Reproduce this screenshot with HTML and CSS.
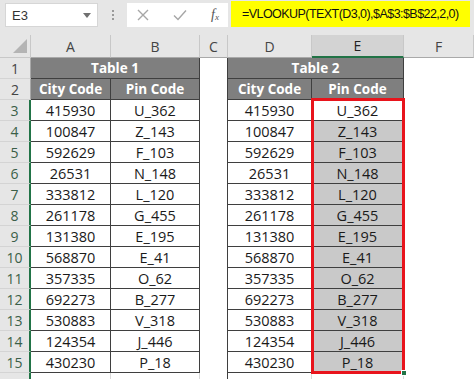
FILE: index.html
```html
<!DOCTYPE html>
<html lang="en">
<head>
    <meta charset="UTF-8">
    <meta name="viewport" content="width=device-width, initial-scale=1.0">
    <title>VLOOKUP with TEXT</title>
    <link rel="stylesheet" href="styles.css">
</head>
<body>
    <div class="toolbar">
        <div class="namebox">
            <span>E3</span>
            <svg class="caret" width="8" height="5" viewBox="0 0 8 5"><path d="M0 0h8L4 5z" fill="#707070"/></svg>
        </div>
        <div class="grip">
            <i></i><i></i><i></i>
        </div>
        <div class="fxbox">
            <svg width="12" height="12" viewBox="0 0 12 12"><path d="M1 1l10 10M11 1L1 11" stroke="#a6a6a6" stroke-width="1.4" fill="none"/></svg>
            <svg width="14" height="12" viewBox="0 0 14 12"><path d="M1 6.5l4 4L13 1.5" stroke="#a6a6a6" stroke-width="1.4" fill="none"/></svg>
            <span class="fx">f<sub>x</sub></span>
        </div>
        <div class="formula">=VLOOKUP(TEXT(D3,0),$A$3:$B$22,2,0)</div>
    </div>

    <div class="sheet">
        <div class="row head">
            <div class="corner"><svg width="14" height="14" viewBox="0 0 14 14"><path d="M14 0v14H0z" fill="#b4b4b4"/></svg></div>
            <div class="ch">A</div>
            <div class="ch">B</div>
            <div class="ch">C</div>
            <div class="ch">D</div>
            <div class="ch active">E</div>
            <div class="ch">F</div>
        </div>

        <div class="row">
            <div class="rh">1</div>
            <div class="th span2">Table 1</div>
            <div class="gap"></div>
            <div class="th span2">Table 2</div>
            <div class="blank"></div>
        </div>
        <div class="row">
            <div class="rh">2</div>
            <div class="th">City Code</div>
            <div class="th">Pin Code</div>
            <div class="gap"></div>
            <div class="th">City Code</div>
            <div class="th">Pin Code</div>
            <div class="blank"></div>
        </div>
        <div class="row">
            <div class="rh sel-row">3</div>
            <div class="c">415930</div><div class="c">U_362</div><div class="gap"></div>
            <div class="c">415930</div><div class="c">U_362</div><div class="blank"></div>
        </div>
        <div class="row">
            <div class="rh sel-row">4</div>
            <div class="c">100847</div><div class="c">Z_143</div><div class="gap"></div>
            <div class="c">100847</div><div class="c sel">Z_143</div><div class="blank"></div>
        </div>
        <div class="row">
            <div class="rh sel-row">5</div>
            <div class="c">592629</div><div class="c">F_103</div><div class="gap"></div>
            <div class="c">592629</div><div class="c sel">F_103</div><div class="blank"></div>
        </div>
        <div class="row">
            <div class="rh sel-row">6</div>
            <div class="c">26531</div><div class="c">N_148</div><div class="gap"></div>
            <div class="c">26531</div><div class="c sel">N_148</div><div class="blank"></div>
        </div>
        <div class="row">
            <div class="rh sel-row">7</div>
            <div class="c">333812</div><div class="c">L_120</div><div class="gap"></div>
            <div class="c">333812</div><div class="c sel">L_120</div><div class="blank"></div>
        </div>
        <div class="row">
            <div class="rh sel-row">8</div>
            <div class="c">261178</div><div class="c">G_455</div><div class="gap"></div>
            <div class="c">261178</div><div class="c sel">G_455</div><div class="blank"></div>
        </div>
        <div class="row">
            <div class="rh sel-row">9</div>
            <div class="c">131380</div><div class="c">E_195</div><div class="gap"></div>
            <div class="c">131380</div><div class="c sel">E_195</div><div class="blank"></div>
        </div>
        <div class="row">
            <div class="rh sel-row">10</div>
            <div class="c">568870</div><div class="c">E_41</div><div class="gap"></div>
            <div class="c">568870</div><div class="c sel">E_41</div><div class="blank"></div>
        </div>
        <div class="row">
            <div class="rh sel-row">11</div>
            <div class="c">357335</div><div class="c">O_62</div><div class="gap"></div>
            <div class="c">357335</div><div class="c sel">O_62</div><div class="blank"></div>
        </div>
        <div class="row">
            <div class="rh sel-row">12</div>
            <div class="c">692273</div><div class="c">B_277</div><div class="gap"></div>
            <div class="c">692273</div><div class="c sel">B_277</div><div class="blank"></div>
        </div>
        <div class="row">
            <div class="rh sel-row">13</div>
            <div class="c">530883</div><div class="c">V_318</div><div class="gap"></div>
            <div class="c">530883</div><div class="c sel">V_318</div><div class="blank"></div>
        </div>
        <div class="row">
            <div class="rh sel-row">14</div>
            <div class="c">124354</div><div class="c">J_446</div><div class="gap"></div>
            <div class="c">124354</div><div class="c sel">J_446</div><div class="blank"></div>
        </div>
        <div class="row">
            <div class="rh sel-row">15</div>
            <div class="c">430230</div><div class="c">P_18</div><div class="gap"></div>
            <div class="c">430230</div><div class="c sel">P_18</div><div class="blank"></div>
        </div>
        <div class="row">
            <div class="rh sel-row"></div>
            <div class="e"></div><div class="e"></div><div class="gap"></div>
            <div class="e"></div><div class="e"></div><div class="blank"></div>
        </div>

        <!-- red range outline drawn over E3:E15 -->
        <div class="range"><span class="handle"></span></div>
    </div>
</body>
</html>
```

FILE: styles.css
```css
:root {
    --chrome: #e6e6e6;
    --head-line: #c8c8c8;
    --table-head: #7f7f7f;
    --cell-line: #3f3f3f;
    --excel-green: #217346;
    --pick: #c9c9c9;
    --outline: #e8141c;
}

* {
    margin: 0;
    padding: 0;
    box-sizing: border-box;
}

body {
    width: 474px;
    height: 379px;
    overflow: hidden;
    background: #fff;
    font-family: 'Open Sans', 'Liberation Sans', sans-serif;
    color: #1a1a1a;
}

/* formula bar */
.toolbar {
    height: 35px;
    background: var(--chrome);
    display: flex;
    align-items: flex-start;
    padding: 3px 4px 0 5px;
}

.namebox {
    flex-shrink: 0;
    width: 93px;
    height: 24px;
    background: #fff;
    border: 1px solid #d6d6d6;
    display: flex;
    align-items: center;
    justify-content: space-between;
    padding: 0 6px 0 6px;
    font-family: 'Liberation Sans', sans-serif;
    font-size: 13px;
    color: #333;
}

.grip {
    flex-shrink: 0;
    width: 29px;
    height: 24px;
    display: flex;
    flex-direction: column;
    align-items: center;
    justify-content: center;
    gap: 2px;
}

.grip i {
    width: 2px;
    height: 2px;
    background: #9a9a9a;
}

.fxbox {
    flex-shrink: 0;
    width: 101px;
    height: 24px;
    background: #fff;
    display: flex;
    align-items: center;
    justify-content: space-between;
    padding: 0 9px 0 10px;
}

.fx {
    font-family: 'Liberation Serif', serif;
    font-style: italic;
    font-size: 14px;
    color: #555;
}

.fx sub {
    font-size: 9px;
    vertical-align: -1px;
}

.formula {
    flex: 1;
    min-width: 0;
    overflow: hidden;
    margin-left: 3px;
    margin-top: -2px;
    height: 26px;
    background: #ffff00;
    font-family: 'Liberation Sans', sans-serif;
    font-size: 12.5px;
    letter-spacing: -0.55px;
    color: #111;
    display: flex;
    align-items: center;
    padding-left: 11px;
    white-space: nowrap;
}

/* worksheet */
.sheet {
    position: relative;
}

.row {
    display: grid;
    grid-template-columns: 31px 80px 89px 28px 84px 92px 70px;
    height: 21px;
}

.row.head {
    height: 23px;
}

.corner {
    background: var(--chrome);
    border-right: 1px solid var(--head-line);
    border-bottom: 1px solid var(--head-line);
    display: flex;
    align-items: flex-end;
    justify-content: flex-end;
    padding: 0 3px 4px 0;
}

.ch {
    background: var(--chrome);
    border-right: 1px solid var(--head-line);
    border-bottom: 1px solid #a9a9a9;
    display: flex;
    align-items: center;
    justify-content: center;
    font-size: 14px;
    color: #444;
}

.ch.active {
    background: #d3d3d3;
    border-bottom: 2px solid var(--excel-green);
    color: #222;
}

.rh {
    background: var(--chrome);
    border-right: 1px solid #a9a9a9;
    border-bottom: 1px solid #d4d4d4;
    display: flex;
    align-items: center;
    justify-content: center;
    font-size: 14px;
    color: #444;
}

.rh.sel-row {
    border-right: 2px solid var(--excel-green);
    color: #3b5f48;
}

.th {
    background: var(--table-head);
    color: #fff;
    font-weight: 700;
    font-size: 13.5px;
    border-right: 1px solid var(--cell-line);
    border-bottom: 1px solid var(--cell-line);
    display: flex;
    align-items: center;
    justify-content: center;
}

.th.span2 {
    grid-column: span 2;
}

.c {
    background: #fff;
    border-right: 1px solid var(--cell-line);
    border-bottom: 1px solid var(--cell-line);
    display: flex;
    align-items: center;
    justify-content: center;
    font-size: 14.5px;
}

.c.sel {
    background: var(--pick);
}

.e {
    border-right: 1px solid #d9d9d9;
}

.gap {
    border-right: 1px solid var(--cell-line);
}

.blank {
    background: #fff;
}

.range {
    position: absolute;
    left: 311px;
    top: 63px;
    width: 94px;
    height: 276px;
    border: 3px solid var(--outline);
}

.handle {
    position: absolute;
    right: -5px;
    bottom: -5px;
    width: 6px;
    height: 6px;
    background: var(--excel-green);
    border: 1px solid #fff;
}
```
